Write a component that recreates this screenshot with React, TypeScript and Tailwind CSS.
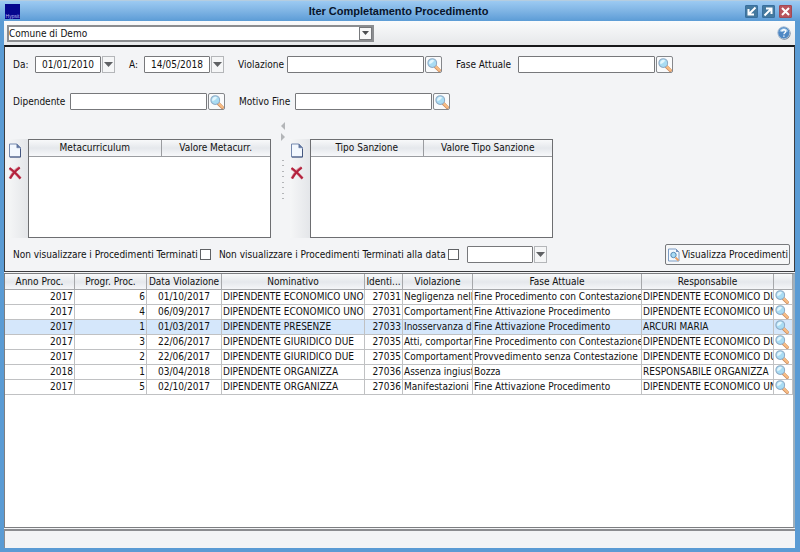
import { useId } from 'react';
import type { ReactNode } from 'react';

interface Procedure {
  year: number;
  progressive: number;
  date: string;
  name: string;
  code: number;
  violation: string;
  phase: string;
  manager: string;
}

const PROCEDURES: Procedure[] = [
  { year: 2017, progressive: 6, date: '01/10/2017', name: 'DIPENDENTE ECONOMICO UNO', code: 27031, violation: "Negligenza nell'", phase: 'Fine Procedimento con Contestazione', manager: 'DIPENDENTE ECONOMICO DUE' },
  { year: 2017, progressive: 4, date: '06/09/2017', name: 'DIPENDENTE ECONOMICO UNO', code: 27031, violation: 'Comportamento', phase: 'Fine Attivazione Procedimento', manager: 'DIPENDENTE ECONOMICO UNO' },
  { year: 2017, progressive: 1, date: '01/03/2017', name: 'DIPENDENTE PRESENZE', code: 27033, violation: 'Inosservanza d', phase: 'Fine Attivazione Procedimento', manager: 'ARCURI MARIA' },
  { year: 2017, progressive: 3, date: '22/06/2017', name: 'DIPENDENTE GIURIDICO DUE', code: 27035, violation: 'Atti, comportam', phase: 'Fine Procedimento con Contestazione', manager: 'DIPENDENTE ECONOMICO DUE' },
  { year: 2017, progressive: 2, date: '22/06/2017', name: 'DIPENDENTE GIURIDICO DUE', code: 27035, violation: 'Comportamenti', phase: 'Provvedimento senza Contestazione', manager: 'DIPENDENTE ECONOMICO DUE' },
  { year: 2018, progressive: 1, date: '03/04/2018', name: 'DIPENDENTE ORGANIZZA', code: 27036, violation: 'Assenza ingiust', phase: 'Bozza', manager: 'RESPONSABILE ORGANIZZA' },
  { year: 2017, progressive: 5, date: '02/10/2017', name: 'DIPENDENTE ORGANIZZA', code: 27036, violation: 'Manifestazioni i', phase: 'Fine Attivazione Procedimento', manager: 'DIPENDENTE ECONOMICO UNO' },
];

const SELECTED_ROW = 2;

const HEADER_BG = 'bg-linear-to-b from-[#f8f9fa] via-[#e5e8ec] to-[#f7f8fa]';
const FIELD = 'h-[17px] rounded-[1px] border border-[#77787b] bg-white px-1 outline-none';

function Magnifier() {
  return (
    <svg viewBox="0 0 16 16" className="block size-[14px] shrink-0" aria-hidden="true">
      <path d="M9.2 9.4 14 14.2" stroke="#c98a5e" strokeWidth="3.8" strokeLinecap="round" />
      <path d="M9.8 9.6 14.2 14" stroke="#f8bd84" strokeWidth="2.6" strokeLinecap="round" />
      <circle cx="6" cy="5.8" r="5" fill="#a9dcf3" stroke="#8fabc6" strokeWidth="1.2" />
      <path d="M2.6 6.8a3.6 3.6 0 0 1 5.6-4c-1.6 2.8-3.4 3.8-5.6 4z" fill="#e3f6fd" />
    </svg>
  );
}

function PageIcon() {
  return (
    <svg viewBox="0 0 14 15" className="block h-[15px] w-[14px]" aria-hidden="true">
      <path d="M1.5 1h7.3L12.5 4.8V14h-11z" fill="#f3f8fe" stroke="#7488ae" strokeWidth="1" />
      <path d="M8.8 1v3.8h3.7z" fill="#5f759f" stroke="#5f759f" strokeWidth=".5" />
      <path d="M2 14h10.5V6" fill="none" stroke="#45577f" strokeWidth="1" />
    </svg>
  );
}

function DeleteIcon() {
  return (
    <svg viewBox="0 0 14 14" className="block size-[14px]" aria-hidden="true">
      <path d="M1.5 2.5C5 4.5 9 8.5 12.5 12.5M11.5 1.5C7.5 4 4 8 2 12.5" stroke="#d78a98" strokeWidth="3" fill="none" />
      <path d="M1.5 2C5 4.5 9 8.5 12.5 12.5M11.8 1.5C7.5 4.5 4.5 8 2 12.5" stroke="#b3213c" strokeWidth="1.9" fill="none" />
    </svg>
  );
}

function DownArrow() {
  return (
    <svg viewBox="0 0 9 5" className="block h-[5px] w-[9px]" aria-hidden="true">
      <path d="M0 0h9L4.5 5z" fill="#5f6164" />
    </svg>
  );
}

/** Small raised button in the title bar. */
function WindowButton({ label, color, children }: { label: string; color: string; children: ReactNode }) {
  return (
    <button type="button" aria-label={label} className={`flex size-[13px] items-center justify-center rounded-[1px] border ${color}`}>
      <svg viewBox="0 0 11 11" className="size-[11px]" fill="none" stroke="#fff" strokeWidth="2" aria-hidden="true">
        {children}
      </svg>
    </button>
  );
}

function CalendarButton({ label }: { label: string }) {
  return (
    <button
      type="button"
      aria-label={label}
      className="ml-px flex h-[17px] w-[13px] items-center justify-center border border-[#b4b6b9] bg-[#f5f6f7]"
    >
      <DownArrow />
    </button>
  );
}

function DateField({ label, value, labelClass }: { label: string; value: string; labelClass: string }) {
  const id = useId();
  return (
    <div className="flex h-[17px] items-center">
      <label htmlFor={id} className={labelClass}>
        {label}
      </label>
      <input id={id} type="text" defaultValue={value} className={`${FIELD} w-[66px] text-center`} />
      <CalendarButton label={`Calendario ${label}`} />
    </div>
  );
}

function LookupField({ label, labelClass }: { label: string; labelClass: string }) {
  const id = useId();
  return (
    <div className="flex h-[17px] items-center">
      <label htmlFor={id} className={labelClass}>
        {label}
      </label>
      <input id={id} type="text" className={`${FIELD} w-[137px]`} />
      <button
        type="button"
        aria-label={`Cerca ${label}`}
        className="ml-px flex size-[17px] items-center justify-center rounded-[2px] border border-[#85878b] bg-[#fafbfc]"
      >
        <Magnifier />
      </button>
    </div>
  );
}

/** Empty two-column list with its new/delete strip on the left. */
function EditableList({ first, second, firstWidth }: { first: string; second: string; firstWidth: string }) {
  return (
    <div className="mt-[17px] flex h-[99px]">
      <div className="flex w-5 flex-col items-start gap-2 bg-linear-to-r from-[#f5f6f7] to-[#e4e6e9] pt-1">
        <button type="button" aria-label={`Nuovo ${first}`}>
          <PageIcon />
        </button>
        <button type="button" aria-label={`Elimina ${first}`}>
          <DeleteIcon />
        </button>
      </div>
      <div className="w-[243px] border border-[#6d6e71] bg-white">
        <table className="w-full table-fixed border-collapse">
          <thead>
            <tr className={`h-4 ${HEADER_BG}`}>
              <th className={`${firstWidth} border-r border-b border-[#9a9ca0] font-normal`}>{first}</th>
              <th className="border-b border-[#9a9ca0] font-normal">{second}</th>
            </tr>
          </thead>
        </table>
      </div>
    </div>
  );
}

function SplitHandle() {
  return (
    <div className="flex w-[19px] flex-col items-center pl-1">
      <svg viewBox="0 0 6 78" className="h-[78px] w-[6px]" fill="#b3b5b8" aria-hidden="true">
        <path d="M5 0v8L1 4zM1 11v8l4-4z" />
        {[38, 43, 49, 54, 60, 65, 71, 76].map((y) => (
          <rect key={y} x="2" y={y} width="2" height="1" />
        ))}
      </svg>
    </div>
  );
}

function HeaderCell({ width, children }: { width: string; children?: ReactNode }) {
  return (
    <th className={`${width} overflow-hidden border-r border-b border-[#a6a8ab] p-0 font-normal whitespace-nowrap`}>{children}</th>
  );
}

function Cell({ align = 'text-left', children }: { align?: string; children: ReactNode }) {
  return (
    <td className={`${align} overflow-hidden border-r border-b border-[#c0c1c3] px-px py-0 whitespace-nowrap`}>{children}</td>
  );
}

function ProcedureTable() {
  return (
    <table className="w-full table-fixed border-separate border-spacing-0">
      <thead>
        <tr className={`h-4 ${HEADER_BG}`}>
          <HeaderCell width="w-[70px]">Anno Proc.</HeaderCell>
          <HeaderCell width="w-[72px]">Progr. Proc.</HeaderCell>
          <HeaderCell width="w-[75px]">Data Violazione</HeaderCell>
          <HeaderCell width="w-[143px]">Nominativo</HeaderCell>
          <HeaderCell width="w-[38px]">Identi...</HeaderCell>
          <HeaderCell width="w-[70px]">Violazione</HeaderCell>
          <HeaderCell width="w-[169px]">Fase Attuale</HeaderCell>
          <HeaderCell width="w-auto">Responsabile</HeaderCell>
          <HeaderCell width="w-[19px]" />
        </tr>
      </thead>
      <tbody>
        {PROCEDURES.map((row, i) => (
          <tr key={i} className={`h-[15px] ${i === SELECTED_ROW ? 'bg-[#d5e7fb]' : 'bg-white'}`}>
            <Cell align="text-right">{row.year}</Cell>
            <Cell align="text-right">{row.progressive}</Cell>
            <Cell align="text-center">{row.date}</Cell>
            <Cell>{row.name}</Cell>
            <Cell align="text-right">{row.code}</Cell>
            <Cell>{row.violation}</Cell>
            <Cell>{row.phase}</Cell>
            <Cell>{row.manager}</Cell>
            <Cell>
              <button type="button" aria-label="Dettaglio procedimento" className="block">
                <Magnifier />
              </button>
            </Cell>
          </tr>
        ))}
      </tbody>
    </table>
  );
}

export default function App() {
  return (
    <div className="flex min-h-screen flex-col bg-[#5a9bd4] font-['DejaVu_Sans_Condensed','DejaVu_Sans',sans-serif] text-[10px] leading-[14px] text-[#111]">
      <header className="flex h-[21px] items-center border-t border-[#b5cde0] bg-linear-to-b from-[#9ccaf2] via-[#7fb4e4] to-[#5c9cd6] px-[5px]">
        <div className="flex flex-1">
          <div className="flex size-[15px] flex-col items-center justify-end bg-[#06068e] font-['Liberation_Sans',sans-serif] text-[5px] leading-[5px] text-[#b9b4f0]">
            Hypsit
          </div>
        </div>
        <h1 className="font-['Liberation_Sans',sans-serif] text-[11px] font-bold text-[#07142b]">Iter Completamento Procedimento</h1>
        <div className="flex flex-1 justify-end gap-[4px] pr-[3px]">
          <WindowButton label="Riduci" color="border-[#39709f] bg-[#44799f]">
            <path d="M9.5 1.5 3 8M2.5 3v5.5H8" />
          </WindowButton>
          <WindowButton label="Ingrandisci" color="border-[#39709f] bg-[#44799f]">
            <path d="M1.5 9.5 8 3M3 2.5h5.5V8" />
          </WindowButton>
          <WindowButton label="Chiudi" color="border-[#a04a55] bg-[#b9545c]">
            <path d="M2 2l7 7M9 2l-7 7" />
          </WindowButton>
        </div>
      </header>

      <main className="mr-[5px] mb-[4px] ml-[4px] flex flex-1 flex-col bg-[#f3f4f6]">
        <div className="flex h-6 items-center justify-between bg-linear-to-b from-[#fafbfc] to-[#e6e8ea] pr-1 pl-[3px]">
          <div className="relative">
            <select
              aria-label="Ente"
              className="block h-[17px] w-[367px] appearance-none border-2 border-[#8b8d90] bg-white outline-none"
            >
              <option>Comune di Demo</option>
            </select>
            <span className="pointer-events-none absolute top-[2px] right-[2px] flex h-[13px] w-[13px] items-center justify-center border border-[#77797c] bg-[#f7f8f9]">
              <svg viewBox="0 0 7 4" className="h-[4px] w-[7px]" aria-hidden="true">
                <path d="M0 0h7L3.5 4z" fill="#4c4e51" />
              </svg>
            </span>
          </div>
          <button type="button" aria-label="Aiuto">
            <svg viewBox="0 0 14 14" className="block size-[14px]" aria-hidden="true">
              <circle cx="7.3" cy="7.4" r="6.3" fill="#6b7c91" />
              <circle cx="6.8" cy="6.8" r="6" fill="#4f88c4" stroke="#a9bfd6" strokeWidth="1" />
              <path d="M2.5 5.5a4.5 4.5 0 0 1 8.6 0z" fill="#a5cbec" />
              <path d="M4.9 5.5c.1-2.5 4.2-2.2 3.9.1C8.6 6.800 7 6.900 6.900 8.300M6.900 9.400v1.300" stroke="#fff" strokeWidth="1.3" fill="none" />
            </svg>
          </button>
        </div>

        <section className="border border-t-2 border-[#3c3d40] border-t-[#17181a] pb-[6px]">
          <div className="flex flex-wrap gap-x-[14px] px-2 pt-[9px]">
            <DateField label="Da:" value="01/01/2010" labelClass="w-[22px]" />
            <DateField label="A:" value="14/05/2018" labelClass="w-[15px]" />
            <LookupField label="Violazione" labelClass="w-[49px]" />
            <LookupField label="Fase Attuale" labelClass="w-[62px]" />
          </div>
          <div className="flex flex-wrap gap-x-[14px] px-2 pt-5">
            <LookupField label="Dipendente" labelClass="w-[57px]" />
            <LookupField label="Motivo Fine" labelClass="w-[56px]" />
          </div>

          <div className="mt-3 flex pl-[3px]">
            <EditableList first="Metacurriculum" second="Valore Metacurr." firstWidth="w-[132px]" />
            <SplitHandle />
            <EditableList first="Tipo Sanzione" second="Valore Tipo Sanzione" firstWidth="w-[112px]" />
          </div>

          <div className="mt-[6px] flex items-center pr-[4px] pl-2">
            <label className="flex items-center gap-[2px] whitespace-nowrap">
              Non visualizzare i Procedimenti Terminati
              <input type="checkbox" className="size-[11px] appearance-none border border-[#606265] bg-white checked:bg-[#5a9bd4]" />
            </label>
            <label className="ml-2 flex items-center gap-[2px] whitespace-nowrap">
              Non visualizzare i Procedimenti Terminati alla data
              <input type="checkbox" className="size-[11px] appearance-none border border-[#606265] bg-white checked:bg-[#5a9bd4]" />
            </label>
            <input type="text" aria-label="Terminati alla data" className={`${FIELD} ml-2 w-[66px]`} />
            <CalendarButton label="Calendario terminati" />
            <button
              type="button"
              className="ml-auto flex h-[21px] items-center gap-[2px] rounded-[2px] border border-[#77797c] bg-[#f6f7f8] px-px whitespace-nowrap"
            >
              <svg viewBox="0 0 13 14" className="h-[14px] w-[13px] shrink-0" aria-hidden="true">
                <path d="M1.5 1H9l3 3v9H1.5z" fill="#f4f9fe" stroke="#7d9cc4" />
                <path d="M9 1v3h3z" fill="#7793bd" />
                <circle cx="6.5" cy="7" r="2.7" fill="#aadcf4" stroke="#5689b5" />
                <path d="m8.5 9.5 3 3" stroke="#e9a066" strokeWidth="2" />
              </svg>
              Visualizza Procedimenti
            </button>
          </div>
        </section>

        <section className="mt-px flex-1 border-t border-r-2 border-b border-l border-[#7d7e81] border-r-[#9fb0bd] bg-white">
          <ProcedureTable />
        </section>

        <footer className="mt-px h-[19px] border-t-2 border-l border-[#8b8c90] bg-[#f3f4f6]" />
      </main>
    </div>
  );
}
